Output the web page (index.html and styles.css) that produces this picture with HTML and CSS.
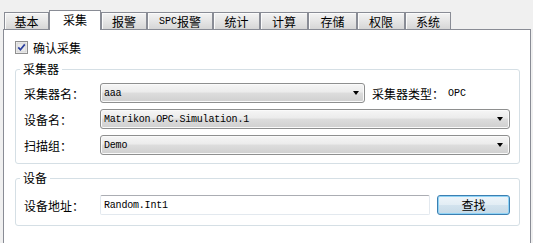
FILE: index.html
```html
<!DOCTYPE html>
<html>
<head>
<meta charset="utf-8">
<link rel="stylesheet" href="styles.css">
</head>
<body>
<div class="tabs">
  <div class="tab t-basic">基本</div>
  <div class="tab active t-collect">采集</div>
  <div class="tab t-alarm">报警</div>
  <div class="tab t-spc"><span class="mono">SPC</span>报警</div>
  <div class="tab t-stat">统计</div>
  <div class="tab t-calc">计算</div>
  <div class="tab t-store">存储</div>
  <div class="tab t-perm">权限</div>
  <div class="tab t-sys">系统</div>
</div>
<div class="panel">
  <div class="check-row">
    <span class="checkbox">
      <svg width="13" height="13" viewBox="0 0 13 13">
        <rect x="0.5" y="0.5" width="12" height="12" fill="#f4f4f4" stroke="#8f8f8f"/>
        <rect x="2" y="2" width="9" height="9" fill="#e9e9e9" stroke="#c6c6c6" stroke-width="0.6"/>
        <path d="M3.3 6.4 L5.4 8.8 L9.8 3.4" fill="none" stroke="#2a3f9e" stroke-width="1.7"/>
      </svg>
    </span>
    <span class="check-label">确认采集</span>
  </div>

  <fieldset class="group group-collector">
    <legend>采集器</legend>
    <div class="row">
      <span class="lbl">采集器名：</span>
      <div class="combo combo-short"><span class="val">aaa</span><i class="arrow"></i></div>
      <span class="type-lbl">采集器类型：</span><span class="type-val">OPC</span>
    </div>
    <div class="row">
      <span class="lbl">设备名：</span>
      <div class="combo combo-wide"><span class="val">Matrikon.OPC.Simulation.1</span><i class="arrow"></i></div>
    </div>
    <div class="row">
      <span class="lbl">扫描组：</span>
      <div class="combo combo-wide"><span class="val">Demo</span><i class="arrow"></i></div>
    </div>
  </fieldset>

  <fieldset class="group group-device">
    <legend>设备</legend>
    <div class="row">
      <span class="lbl">设备地址：</span>
      <div class="input"><span class="val">Random.Int1</span></div>
      <button class="btn">查找</button>
    </div>
  </fieldset>
</div>
</body>
</html>
```

FILE: styles.css
```css
html, body {
  margin: 0;
  padding: 0;
  background: #f0f0f0;
  font-family: "Noto Sans CJK SC", "Liberation Sans", sans-serif;
  font-size: 12px;
  color: #000;
}

body {
  height: 243px;
  overflow: hidden;
}

.tabs {
  display: flex;
  align-items: flex-end;
  padding: 10px 0 0 4px;
  height: 19px;
}

.tab {
  box-sizing: border-box;
  height: 17px;
  border: 1px solid #898c95;
  border-bottom: none;
  background: linear-gradient(#f3f3f3, #e4e4e4 55%, #d6d6d6);
  box-shadow: inset 1px 1px 0 #fbfbfb;
  display: flex;
  align-items: center;
  justify-content: center;
  line-height: 14px;
  padding-top: 1px;
}

.t-basic { width: 45px; }
.t-collect { width: 52px; }
.t-alarm { width: 46px; }
.t-spc { width: 66px; }
.t-stat { width: 47px; }
.t-calc { width: 48px; }
.t-store { width: 49px; }
.t-perm { width: 48px; }
.t-sys { width: 46px; }

.tab.active {
  height: 20px;
  margin-bottom: -1px;
  background: #fff;
  box-shadow: none;
  position: relative;
  z-index: 2;
  align-items: flex-start;
  padding-top: 2px;
}

.mono {
  font-family: "Liberation Mono", monospace;
  font-size: 10px;
}

.panel {
  box-sizing: border-box;
  margin-left: 3px;
  width: 528px;
  height: 215px;
  border: 1px solid #898c95;
  background: #fff;
  padding: 11px 10px 0 11px;
}

.check-row {
  display: flex;
  align-items: center;
  height: 13px;
}

.checkbox {
  display: block;
  width: 13px;
  height: 13px;
}
.checkbox svg { display: block; }

.check-label {
  margin-left: 5px;
  line-height: 13px;
}

.group {
  margin: 8px 0 0 0;
  border: 1px solid #d5dfe5;
  border-radius: 3px;
  padding: 7px 9px 8px 8px;
  min-width: 0;
}

.group legend {
  padding: 0 3px;
  margin-left: -4px;
  line-height: 14px;
  height: 14px;
}

.group-device {
  margin-top: 7px;
  padding-top: 10px;
  padding-bottom: 10px;
}

.row {
  display: flex;
  align-items: center;
  height: 20px;
}
.row + .row { margin-top: 6px; }

.lbl {
  width: 76px;
  flex: none;
}

.combo {
  box-sizing: border-box;
  height: 20px;
  border: 1px solid #8e8f8f;
  border-radius: 3px;
  background: linear-gradient(#f6f6f6, #ebebeb 45%, #dddddd 50%, #cfcfcf);
  box-shadow: inset 0 0 0 1px #fafafa;
  display: flex;
  align-items: center;
  padding: 0 6px 0 3px;
}

.combo-short { width: 265px; flex: none; padding-right: 5px; }
.combo-wide { flex: 1; }

.val {
  flex: 1;
  font-family: "Liberation Mono", monospace;
  font-size: 10px;
  letter-spacing: -0.2px;
  white-space: nowrap;
}

.arrow {
  width: 0;
  height: 0;
  border-left: 3.5px solid transparent;
  border-right: 3.5px solid transparent;
  border-top: 4px solid #000;
}

.type-lbl { margin-left: 7px; }
.type-val {
  margin-left: 4px;
  font-family: "Liberation Mono", monospace;
  font-size: 10px;
}

.input {
  box-sizing: border-box;
  flex: 1;
  height: 20px;
  border: 1px solid #e3e9ef;
  border-top-color: #abadb3;
  border-radius: 2px;
  background: #fff;
  display: flex;
  align-items: center;
  padding-left: 3px;
}

.btn {
  box-sizing: border-box;
  width: 73px;
  height: 20px;
  margin: 0 0 0 7px;
  padding: 0;
  border: 1px solid #3c7fb1;
  border-radius: 3px;
  background: linear-gradient(#eef5fa, #e2edf4 50%, #d3e3ee 50%, #c6dae7);
  box-shadow: inset 0 0 0 1px #8fd3f6;
  font-family: "Noto Sans CJK SC", sans-serif;
  font-size: 12px;
  color: #000;
  line-height: 16px;
}
```
